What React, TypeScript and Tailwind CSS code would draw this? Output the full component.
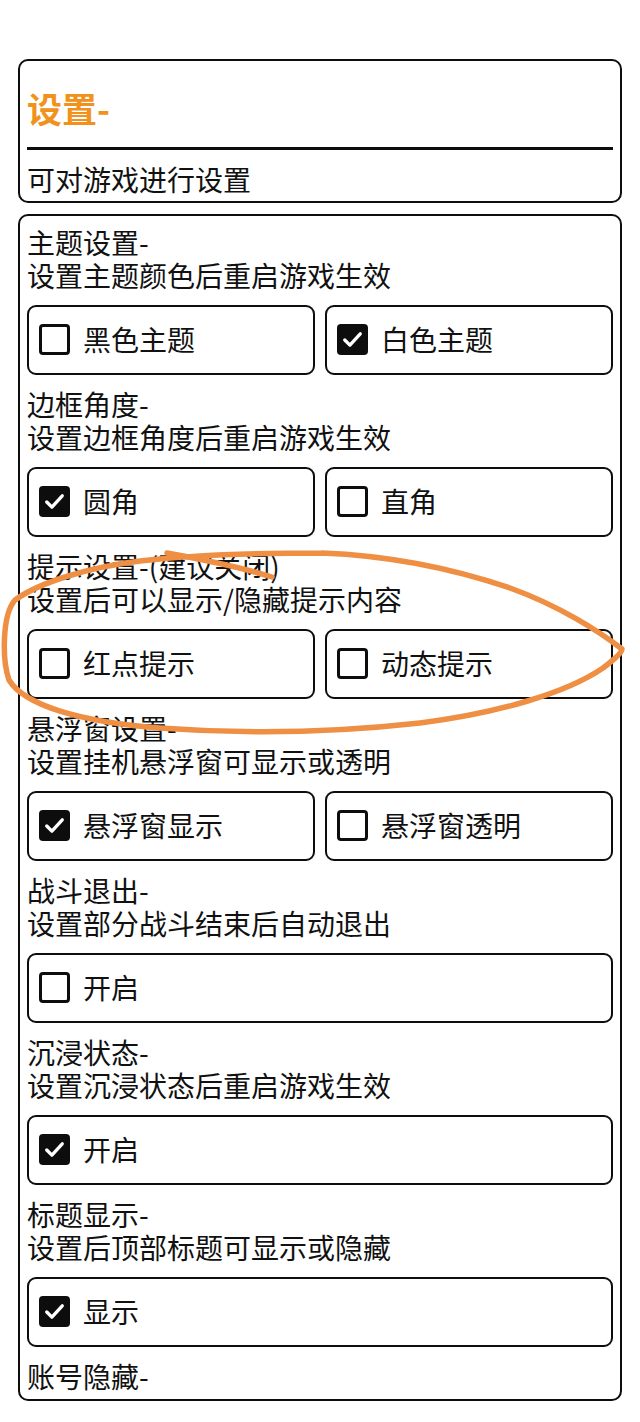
import React from "react";

type Option = { label: string; checked: boolean };
type Section = { title: string; desc?: string; options: Option[] };

const sections: Section[] = [
  {
    title: "主题设置-",
    desc: "设置主题颜色后重启游戏生效",
    options: [
      { label: "黑色主题", checked: false },
      { label: "白色主题", checked: true },
    ],
  },
  {
    title: "边框角度-",
    desc: "设置边框角度后重启游戏生效",
    options: [
      { label: "圆角", checked: true },
      { label: "直角", checked: false },
    ],
  },
  {
    title: "提示设置-(建议关闭)",
    desc: "设置后可以显示/隐藏提示内容",
    options: [
      { label: "红点提示", checked: false },
      { label: "动态提示", checked: false },
    ],
  },
  {
    title: "悬浮窗设置-",
    desc: "设置挂机悬浮窗可显示或透明",
    options: [
      { label: "悬浮窗显示", checked: true },
      { label: "悬浮窗透明", checked: false },
    ],
  },
  {
    title: "战斗退出-",
    desc: "设置部分战斗结束后自动退出",
    options: [{ label: "开启", checked: false }],
  },
  {
    title: "沉浸状态-",
    desc: "设置沉浸状态后重启游戏生效",
    options: [{ label: "开启", checked: true }],
  },
  {
    title: "标题显示-",
    desc: "设置后顶部标题可显示或隐藏",
    options: [{ label: "显示", checked: true }],
  },
  { title: "账号隐藏-", options: [] },
];

function CheckBox({ checked }: { checked: boolean }) {
  return checked ? (
    <div className="w-[31px] h-[31px] rounded-[4px] bg-[#0d0d0d] flex items-center justify-center shrink-0">
      <svg width="31" height="31" viewBox="0 0 30 30">
        <path
          d="M7.5 15.5 L12.5 20.5 L22.5 9.5"
          fill="none"
          stroke="#fff"
          strokeWidth="3.2"
          strokeLinecap="round"
          strokeLinejoin="round"
        />
      </svg>
    </div>
  ) : (
    <div className="w-[31px] h-[31px] rounded-[4px] border-[3px] border-[#0d0d0d] bg-white shrink-0" />
  );
}

function OptionBox({ option }: { option: Option }) {
  return (
    <div className="h-[70px] rounded-[9px] border-[2.5px] border-[#0d0d0d] flex items-center pl-[10px] gap-[13px]">
      <CheckBox checked={option.checked} />
      <span className="text-[28px] leading-[33px] text-[#111]">{option.label}</span>
    </div>
  );
}

export default function App() {
  return (
    <div
      className="relative min-h-[1422px] bg-white pt-[59px] px-[18px] text-[#111]"
      style={{ fontFamily: '"Noto Sans CJK SC", "Noto Sans", sans-serif' }}
    >
      <div className="rounded-[10px] border-[2.5px] border-[#0d0d0d] px-[7px]">
        <div className="pt-[30px] pb-[22px] text-[35px] leading-[34px] font-bold text-[#f0921c]">
          设置-
        </div>
        <div className="h-[2.5px] bg-[#0d0d0d]" />
        <div className="mt-[13px] pb-[5px] text-[28px] leading-[33px]">可对游戏进行设置</div>
      </div>

      <div className="mt-[11px] rounded-[10px] border-[2.5px] border-[#0d0d0d] px-[7px] pt-[10px] pb-[6px]">
        {sections.map((s, i) => (
          <div key={i} className={i < sections.length - 1 ? "mb-[13px]" : ""}>
            <div className="text-[28px] leading-[33px]">{s.title}</div>
            {s.desc && <div className="text-[28px] leading-[33px]">{s.desc}</div>}
            {s.options.length > 0 && (
              <div
                className={`mt-[13px] grid gap-[10px] ${
                  s.options.length === 2 ? "grid-cols-2" : "grid-cols-1"
                }`}
              >
                {s.options.map((o) => (
                  <OptionBox key={o.label} option={o} />
                ))}
              </div>
            )}
          </div>
        ))}
      </div>

      {/* hand-drawn annotation */}
      <svg
        className="absolute left-0 top-0 pointer-events-none"
        width="640"
        height="1422"
        viewBox="0 0 640 1422"
      >
        <g fill="none" stroke="#ef8f43" strokeWidth="5.5" strokeLinecap="round" strokeLinejoin="round">
          <path d="M167 553 C200 559 240 567 272 577" />
          <path d="M322 553 C262 553 200 554 140 561 C90 567 40 582 15 600 C2 615 2 660 9 680 C24 705 80 722 160 728 C240 734 330 733 420 723 C500 713 568 692 603 668 C612 661 622 653 622 649 C600 632 560 606 510 588 C460 571 400 556 322 553" />
        </g>
      </svg>
    </div>
  );
}
